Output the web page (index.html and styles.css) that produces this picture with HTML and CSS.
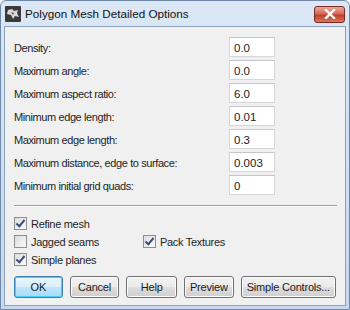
FILE: index.html
```html
<!DOCTYPE html>
<html lang="en">

<head>
    <meta charset="UTF-8">
    <meta name="viewport" content="width=device-width, initial-scale=1.0">
    <title>Polygon Mesh Detailed Options</title>
    <link rel="stylesheet" href="styles.css">
</head>

<body>
    <div class="window">
        <div class="titlebar">
            <svg class="app-icon" width="16" height="16" viewBox="0 0 16 16">
                <rect x="0" y="0" width="16" height="16" rx="1" fill="#3a3a3a"/>
                <path d="M3 4 L7 3 L9 5 L13 4 L12 7 L14 11 L10 10 L8 13 L6 9 L2 8 Z" fill="#d8d8d8"/>
                <path d="M6 6 L9 7 L8 9 Z" fill="#555"/>
            </svg>
            <span class="title">Polygon Mesh Detailed Options</span>
            <div class="close-btn">
                <svg width="12" height="10" viewBox="0 0 12 10">
                    <path d="M2 1 L10 9 M10 1 L2 9" stroke="#fff" stroke-width="2.4" stroke-linecap="square"/>
                </svg>
            </div>
        </div>

        <div class="client">
            <div class="fields">
                <label>Density:</label>
                <input class="num" type="text" value="0.0">
                <label>Maximum angle:</label>
                <input class="num" type="text" value="0.0">
                <label>Maximum aspect ratio:</label>
                <input class="num" type="text" value="6.0">
                <label>Minimum edge length:</label>
                <input class="num" type="text" value="0.01">
                <label>Maximum edge length:</label>
                <input class="num" type="text" value="0.3">
                <label>Maximum distance, edge to surface:</label>
                <input class="num" type="text" value="0.003">
                <label>Minimum initial grid quads:</label>
                <input class="num" type="text" value="0">
            </div>

            <div class="sep"></div>

            <div class="options">
                <div class="check"><span class="box on"></span>Refine mesh</div>
                <div></div>
                <div class="check"><span class="box"></span>Jagged seams</div>
                <div class="check"><span class="box on"></span>Pack Textures</div>
                <div class="check"><span class="box on"></span>Simple planes</div>
                <div></div>
            </div>

            <div class="buttons">
                <button class="btn default w-ok">OK</button>
                <button class="btn w-cancel">Cancel</button>
                <button class="btn w-help">Help</button>
                <button class="btn w-preview">Preview</button>
                <button class="btn w-simple">Simple Controls...</button>
            </div>
        </div>
    </div>
</body>

</html>
```

FILE: styles.css
```css
body {
    margin: 0;
    padding: 0;
    font-family: "Liberation Sans", Arial, sans-serif;
    font-size: 11px;
    letter-spacing: -0.3px;
    color: #1e1e1e;
}

.window {
    width: 350px;
    height: 310px;
    box-sizing: border-box;
    background: linear-gradient(#dbe7f5, #c6d8ee);
    border: 1px solid #6f8aa8;
    border-radius: 6px 6px 0 0;
    padding: 0 3px 3px 3px;
    display: flex;
    flex-direction: column;
}

.titlebar {
    height: 25px;
    display: flex;
    align-items: center;
    padding-left: 1px;
}

.app-icon {
    margin-top: 1px;
}

.title {
    font-size: 11.7px;
    letter-spacing: 0;
    color: #111;
    margin-left: 4px;
    flex: 1;
}

.close-btn {
    width: 29px;
    height: 15px;
    margin-right: 1px;
    margin-top: 1px;
    border: 1px solid #7a2a22;
    border-radius: 3px;
    background: linear-gradient(#e9a99c, #d26a57 45%, #c0402a 55%, #d8785c);
    display: flex;
    align-items: center;
    justify-content: center;
}

.client {
    flex: 1;
    background: #f0f0f0;
    border: 1px solid #8da2bb;
    padding: 10px 9px 0 9px;
}

.fields {
    display: grid;
    grid-template-columns: 215px 46px;
    row-gap: 3px;
    align-items: center;
}

.fields label {
    height: 20px;
    line-height: 22px;
    letter-spacing: -0.4px;
}

.num {
    width: 46px;
    height: 20px;
    box-sizing: border-box;
    border: 1px solid #d4d6da;
    border-top-color: #c4c7cc;
    background: #fff;
    font-family: "Liberation Sans", Arial, sans-serif;
    font-size: 11.5px;
    color: #222;
    padding: 2px 3px 0 4px;
    margin: 0;
}

.sep {
    height: 0;
    border-top: 1px solid #a0a0a0;
    border-bottom: 1px solid #ffffff;
    margin: 10px 0 10px 0;
    width: 323px;
}

.options {
    display: grid;
    grid-template-columns: 129px 150px;
    row-gap: 5px;
}

.check {
    display: flex;
    align-items: center;
    height: 13px;
}

.box {
    width: 11px;
    height: 11px;
    border: 1px solid #8e8f8f;
    background: linear-gradient(135deg, #dcdcdc, #fbfbfb);
    margin-right: 4px;
    position: relative;
}

.box.on::after {
    content: "";
    position: absolute;
    left: 3px;
    top: 0px;
    width: 3px;
    height: 7px;
    border: solid #3b4e7a;
    border-width: 0 2px 2px 0;
    transform: rotate(40deg);
}

.buttons {
    display: flex;
    gap: 7px;
    margin-top: 10px;
}

.btn {
    height: 22px;
    border: 1px solid #707070;
    border-radius: 3px;
    background: linear-gradient(#f2f2f2, #ebebeb 48%, #dddddd 52%, #cfcfcf);
    font-family: "Liberation Sans", Arial, sans-serif;
    font-size: 11px;
    letter-spacing: -0.2px;
    color: #1a1a1a;
    padding: 0;
    box-shadow: inset 0 0 0 1px #fcfcfc;
}

.btn.default {
    border-color: #3c7fb1;
    background: linear-gradient(#eaf6fd, #d9f0fc 48%, #bee6fd 52%, #a7d9f5);
    box-shadow: inset 0 0 0 1px #48d0f6;
}

.w-ok { width: 49px; }
.w-cancel { width: 50px; }
.w-help { width: 51px; }
.w-preview { width: 50px; }
.w-simple { width: 96px; }
```
